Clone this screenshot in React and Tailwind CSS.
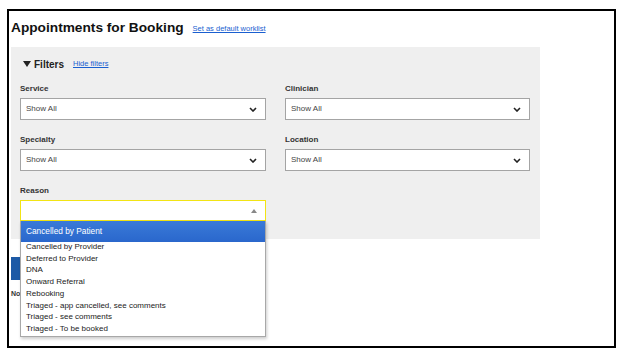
import React from "react";

const reasons = [
    "Cancelled by Provider",
    "Deferred to Provider",
    "DNA",
    "Onward Referral",
    "Rebooking",
    "Triaged - app cancelled, see comments",
    "Triaged - see comments",
    "Triaged - To be booked",
];

function Chevron() {
    return (
        <svg width="8" height="5" viewBox="0 0 8 5" className="shrink-0">
            <polyline points="1,1 4,4 7,1" fill="none" stroke="#222" strokeWidth="1.6" />
        </svg>
    );
}

function Select({ label, value }) {
    return (
        <div className="flex flex-col">
            <div className="h-[10px] mb-[4px] text-[8px] leading-[10px] font-bold text-[#333]">{label}</div>
            <div className="h-[22px] bg-white border-[1.5px] border-[#a4a4a4] flex items-center justify-between pl-[5px] pr-[8px]">
                <span className="text-[8px] text-[#444]">{value}</span>
                <Chevron />
            </div>
        </div>
    );
}

function App() {
    return (
        <div className="w-[623px] h-[359px] bg-white pt-[9px] pl-[7px]" style={{ fontFamily: '"Liberation Sans", Arial, sans-serif' }}>
            <div className="w-[609px] h-[339px] border-2 border-black pl-[2px] overflow-hidden">

                {/* Header */}
                <div className="flex items-center h-[20px] mt-[7px]">
                    <h1 className="text-[13.7px] font-bold text-[#111] leading-none">Appointments for Booking</h1>
                    <a className="ml-[9px] text-[7.5px] text-[#1a5fd0] underline mt-[1px]">Set as default worklist</a>
                </div>

                {/* Filters panel */}
                <div className="mt-[9px] w-[529px] h-[192px] bg-[#efefef] pl-[9px] pr-[10px]">
                    <div className="flex items-center h-[12px] pt-[11px] box-content">
                        <svg width="8" height="6" viewBox="0 0 8 6" className="ml-[3px]">
                            <polygon points="0,0 8,0 4,6" fill="#222" />
                        </svg>
                        <span className="ml-[3px] text-[10px] font-bold text-[#222]">Filters</span>
                        <a className="ml-[9px] text-[7.5px] text-[#1a5fd0] underline">Hide filters</a>
                    </div>

                    <div className="grid grid-cols-[246px_245px] gap-x-[19px] gap-y-[15px] mt-[14px]">
                        <Select label="Service" value="Show All" />
                        <Select label="Clinician" value="Show All" />
                        <Select label="Specialty" value="Show All" />
                        <Select label="Location" value="Show All" />

                        {/* Reason - open dropdown */}
                        <div className="flex flex-col">
                            <div className="h-[10px] mb-[4px] text-[8px] leading-[10px] font-bold text-[#333]">Reason</div>
                            <div className="relative">
                                <div className="h-[21px] bg-white border-[1.5px] border-[#f2e414] flex items-center justify-end pr-[8px]">
                                    <svg width="6" height="4" viewBox="0 0 6 4">
                                        <polygon points="0,4 6,4 3,0" fill="#888" />
                                    </svg>
                                </div>
                                <div className="absolute left-0 top-full w-full z-10 bg-white border border-t-0 border-[#a8a8a8] shadow-[1px_2px_3px_rgba(0,0,0,0.2)]">
                                    <div className="h-[21px] bg-gradient-to-b from-[#3a7ad8] to-[#2a67cc] flex items-center pl-[5px] text-[8.3px] text-white">
                                        Cancelled by Patient
                                    </div>
                                    <ul className="pl-[5px] pb-[1px] -mt-[1px]">
                                        {reasons.map(r => (
                                            <li key={r} className="text-[8px] leading-[11.7px] text-[#222]">{r}</li>
                                        ))}
                                    </ul>
                                </div>
                            </div>
                        </div>
                    </div>
                </div>

                {/* Content behind dropdown */}
                <div className="mt-[18px] w-[90px] h-[23px] bg-[#1d5aa6]"></div>
                <div className="mt-[9px] text-[7px] font-bold text-[#333] leading-[10px]">No</div>
            </div>
        </div>
    );
}

export default App;
